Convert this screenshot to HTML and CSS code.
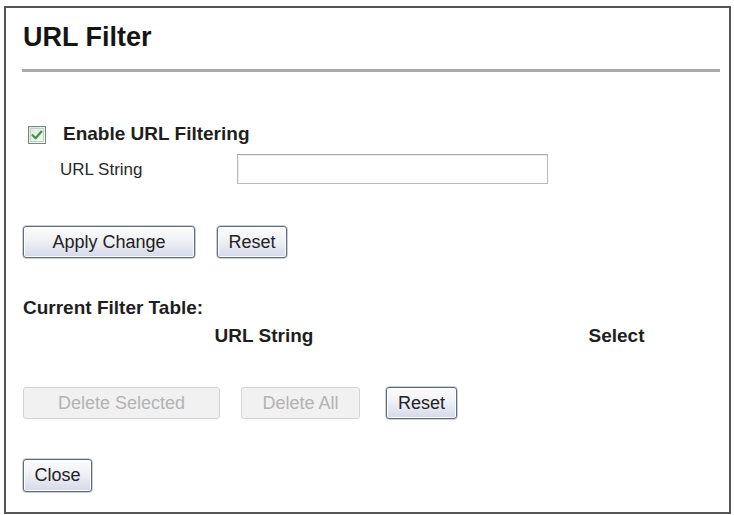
FILE: index.html
```html
<!DOCTYPE html>
<html>
<head>
<meta charset="utf-8">
<link rel="stylesheet" href="styles.css">
</head>
<body>
<div class="frame">
  <h1 class="title">URL Filter</h1>
  <div class="rule"></div>

  <div class="check-row">
    <span class="checkbox">
      <svg width="18" height="18" viewBox="0 0 18 18">
        <defs>
          <linearGradient id="cb" x1="0" y1="0" x2="1" y2="1">
            <stop offset="0" stop-color="#dfe4df"/>
            <stop offset="1" stop-color="#f8faf8"/>
          </linearGradient>
        </defs>
        <rect x="0.5" y="0.5" width="17" height="17" fill="url(#cb)" stroke="#748a7c"/>
        <rect x="2.5" y="2.5" width="13" height="13" fill="none" stroke="#c4cfc7"/>
        <path d="M4.6 9.2 L7.6 12.2 L13.4 5.6" fill="none" stroke="#3a984b" stroke-width="2.3" stroke-linecap="round" stroke-linejoin="round"/>
      </svg>
    </span>
    <span class="check-label">Enable URL Filtering</span>
  </div>

  <div class="field-row">
    <span class="field-label">URL String</span>
    <input class="text-input" type="text">
  </div>

  <div class="btn-row row-apply">
    <button class="btn btn-apply">Apply Change</button>
    <button class="btn btn-reset">Reset</button>
  </div>

  <div class="section-title">Current Filter Table:</div>
  <div class="table-head">
    <span class="th">URL String</span>
    <span class="th th-select">Select</span>
  </div>

  <div class="btn-row row-delete">
    <button class="btn btn-disabled btn-delsel" disabled>Delete Selected</button>
    <button class="btn btn-disabled btn-delall" disabled>Delete All</button>
    <button class="btn btn-reset2">Reset</button>
  </div>

  <div class="btn-row row-close">
    <button class="btn btn-close">Close</button>
  </div>
</div>
</body>
</html>
```

FILE: styles.css
```css
html, body {
  margin: 0;
  padding: 0;
  background: #ffffff;
}

body {
  font-family: "Liberation Sans", Arial, sans-serif;
  color: #1c1c1c;
}

.frame {
  box-sizing: border-box;
  margin: 6px 0 0 4px;
  width: 727px;
  height: 508px;
  border: 2px solid #555555;
  padding: 14px 9px 0 17px;
  background: #ffffff;
}

.title {
  margin: 0;
  font-size: 27px;
  line-height: 31px;
  font-weight: bold;
  color: #151515;
}

.rule {
  margin-top: 16px;
  height: 3px;
  background: #a9a9a9;
  margin-left: -1px;
}

.check-row {
  margin-top: 51px;
  height: 22px;
  display: flex;
  align-items: center;
}

.checkbox {
  display: flex;
  width: 18px;
  height: 18px;
  margin-left: 5px;
  margin-top: 1px;
}

.check-label {
  margin-left: 17px;
  font-size: 19px;
  line-height: 22px;
  font-weight: bold;
  color: #1e1e1e;
}

.field-row {
  margin-top: 9px;
  height: 30px;
  display: flex;
  align-items: center;
}

.field-label {
  margin-left: 37px;
  width: 177px;
  font-size: 17px;
  line-height: 20px;
  padding-top: 2px;
  color: #2a2a2a;
}

.text-input {
  box-sizing: border-box;
  width: 311px;
  height: 30px;
  margin: 0;
  padding: 0 4px;
  border: 1px solid #b9b9b9;
  border-top-color: #a8a8a8;
  background: #ffffff;
  box-shadow: inset 1px 1px 1px #ececec;
}

.btn-row {
  display: flex;
  align-items: center;
}

.row-apply {
  margin-top: 42px;
  gap: 22px;
}

.btn {
  box-sizing: border-box;
  height: 32px;
  margin: 0;
  padding: 0;
  font-family: "Liberation Sans", Arial, sans-serif;
  font-size: 18px;
  color: #222222;
  border: 1px solid #5f6b7d;
  border-radius: 3px;
  background: linear-gradient(#fcfcfd 0%, #f0f1f6 45%, #d5d9e8 100%);
  box-shadow: inset 0 0 0 1px #ffffff, 0 0 0 0.5px #9aa3b0;
}

.btn-apply { width: 172px; }
.btn-reset { width: 70px; }

.section-title {
  margin-top: 39px;
  font-size: 19px;
  line-height: 22px;
  font-weight: bold;
  color: #1e1e1e;
}

.table-head {
  margin-top: 6px;
  display: grid;
  grid-template-columns: 482px 1fr;
  font-size: 19px;
  line-height: 22px;
  font-weight: bold;
  color: #1e1e1e;
}

.th {
  text-align: center;
}

.th-select {
  padding-left: 8px;
}

.row-delete {
  margin-top: 40px;
}

.btn-disabled {
  color: #b3b3b3;
  border-color: #d3d3d3;
  background: #f1f1f1;
  box-shadow: none;
}

.btn-delsel { width: 197px; }
.btn-delall { width: 119px; margin-left: 21px; }
.btn-reset2 { width: 71px; margin-left: 26px; }

.row-close {
  margin-top: 40px;
}

.btn-close {
  width: 69px;
  height: 33px;
}
```
